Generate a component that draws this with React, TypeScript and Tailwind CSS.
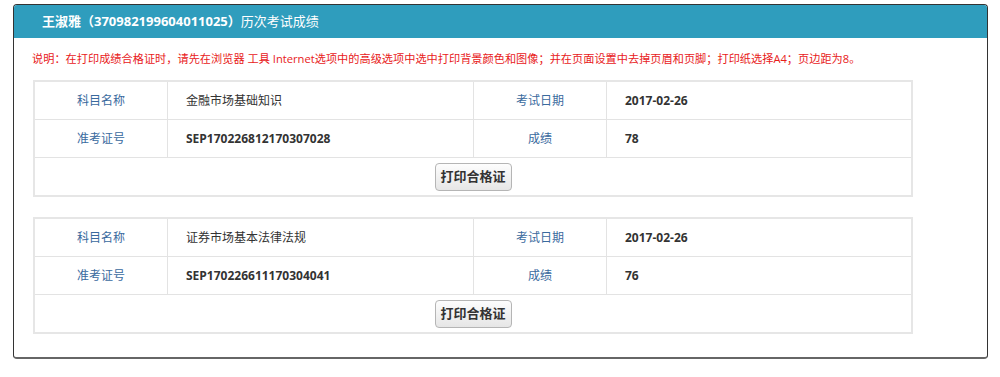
import React from "react";

const font = { fontFamily: '"Open Sans", "Noto Sans CJK SC", sans-serif' };

type Rec = { subject: string; date: string; ticket: string; score: string };

const records: Rec[] = [
  { subject: "金融市场基础知识", date: "2017-02-26", ticket: "SEP170226812170307028", score: "78" },
  { subject: "证券市场基本法律法规", date: "2017-02-26", ticket: "SEP170226611170304041", score: "76" },
];

function Card({ r }: { r: Rec }) {
  return (
    <div className="w-[880px] border-2 border-[#e6e6e6] bg-white">
      <div className="grid grid-cols-[133px_306px_133px_1fr] text-[12px]">
        <div className="h-[38px] flex items-center justify-center text-[#3a6a9e] border-r border-b border-[#e3e3e3]">科目名称</div>
        <div className="h-[38px] flex items-center pl-[18px] text-[#333] border-r border-b border-[#e3e3e3]">{r.subject}</div>
        <div className="h-[38px] flex items-center justify-center text-[#3a6a9e] border-r border-b border-[#e3e3e3]">考试日期</div>
        <div className="h-[38px] flex items-center pl-[18px] font-bold text-[#333] border-b border-[#e3e3e3]">{r.date}</div>
        <div className="h-[38px] flex items-center justify-center text-[#3a6a9e] border-r border-b border-[#e3e3e3]">准考证号</div>
        <div className="h-[38px] flex items-center pl-[18px] font-bold text-[#333] border-r border-b border-[#e3e3e3]">{r.ticket}</div>
        <div className="h-[38px] flex items-center justify-center text-[#3a6a9e] border-r border-b border-[#e3e3e3]">成绩</div>
        <div className="h-[38px] flex items-center pl-[18px] font-bold text-[#333] border-b border-[#e3e3e3]">{r.score}</div>
      </div>
      <div className="h-[37px] flex items-center justify-center">
        <button className="h-[28px] w-[77px] rounded-[4px] border border-[#b5b5b5] bg-gradient-to-b from-[#fdfdfd] to-[#e6e6e6] text-[13px] font-bold text-[#333]">
          打印合格证
        </button>
      </div>
    </div>
  );
}

export default function App() {
  return (
    <div className="w-[1000px] h-[377px] bg-white pt-[4px] pl-[13px]" style={font}>
      <div className="w-[975px] h-[355px] rounded-[4px] border border-[#333] border-b-2 border-b-[#666] overflow-hidden">
        <div className="h-[33px] bg-[#2f9dbd] flex items-center pl-[28px] text-[13px] text-white">
          <span className="font-bold">王淑雅（370982199604011025）</span>
          <span>历次考试成绩</span>
        </div>
        <div className="pl-[18px] pt-[13px] text-[11.2px] text-[#e8201a] leading-[16px]">
          说明：在打印成绩合格证时，请先在浏览器 工具 Internet选项中的高级选项中选中打印背景颜色和图像；并在页面设置中去掉页眉和页脚；打印纸选择A4；页边距为8。
        </div>
        <div className="pl-[19px] pt-[13px] flex flex-col gap-[20px]">
          {records.map((r) => (
            <Card key={r.ticket} r={r} />
          ))}
        </div>
      </div>
    </div>
  );
}
